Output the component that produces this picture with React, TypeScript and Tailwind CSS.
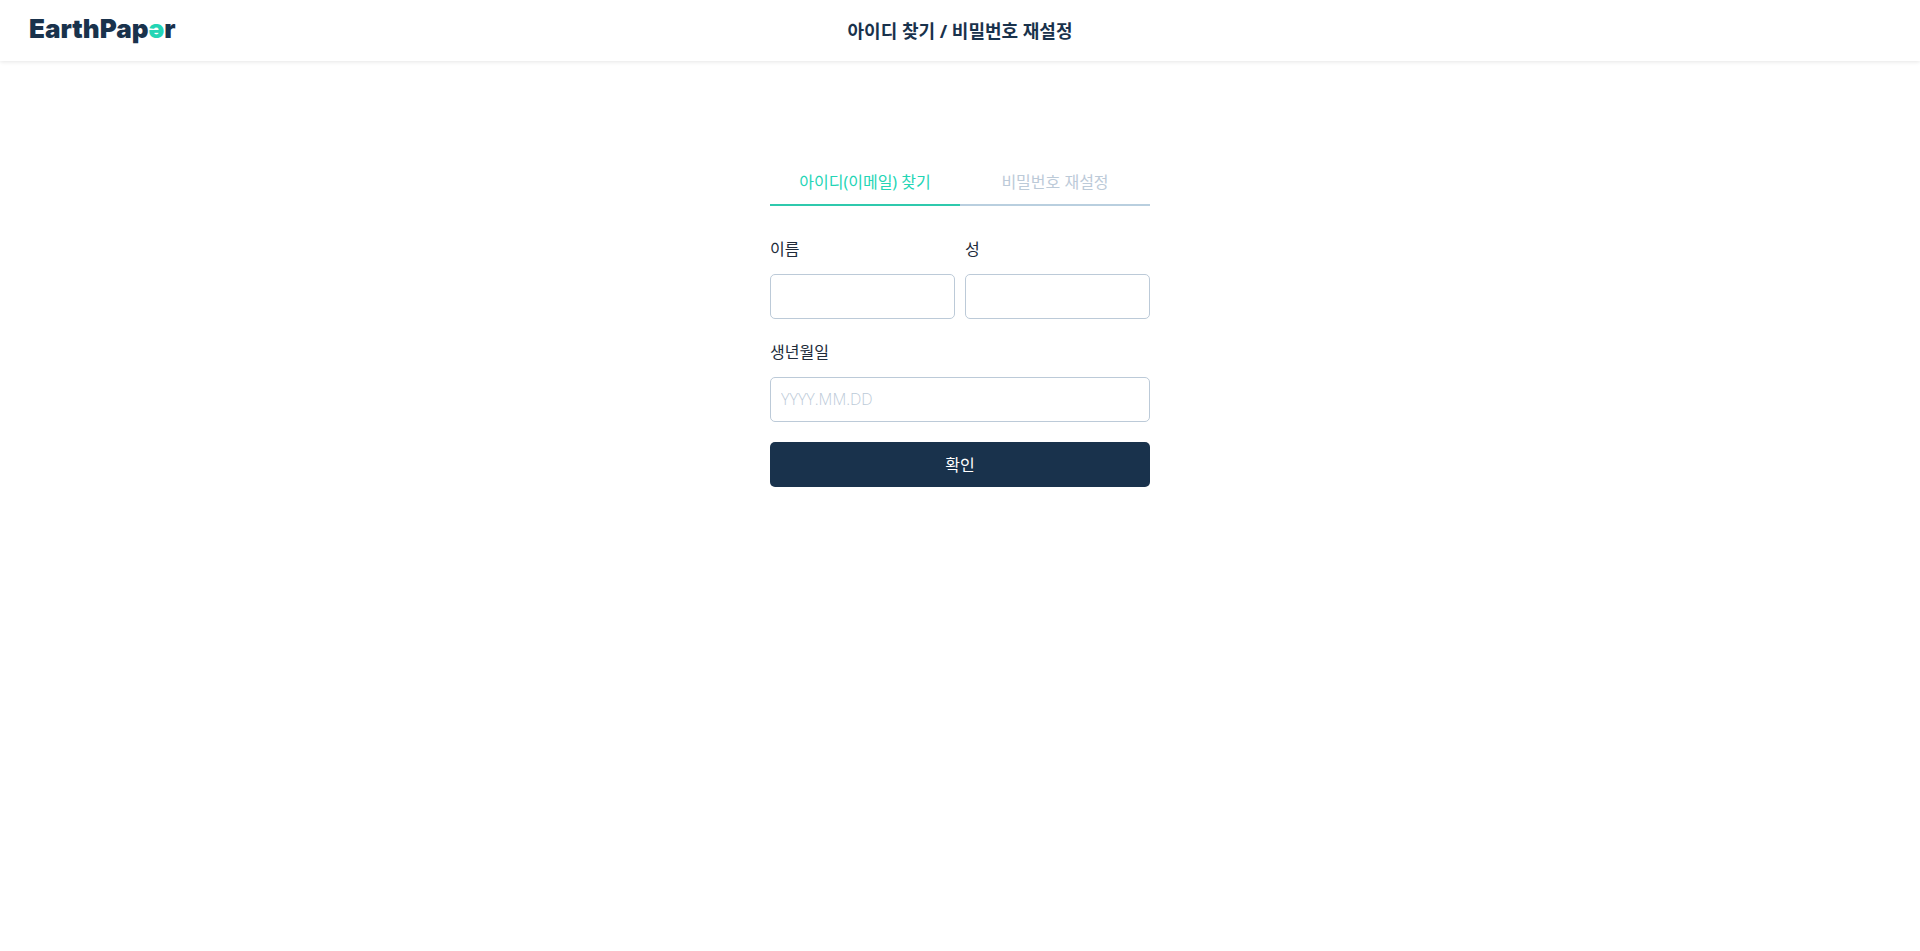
import React, { useState } from 'react'
import { clsx } from 'clsx'

const TABS = [
  { id: 'find-id', label: '아이디(이메일) 찾기' },
  { id: 'reset-password', label: '비밀번호 재설정' },
]

function Logo() {
  return (
    <a
      href="/"
      aria-label="EarthPaper"
      className="pb-1 font-['Inter',sans-serif] text-[26px] leading-7 font-black text-[#19324c]"
    >
      EarthPap<span className="text-[#23d5b5]">ə</span>r
    </a>
  )
}

function Header() {
  return (
    <header className="grid grid-cols-[1fr_auto_1fr] items-center h-[61px] px-[29px] bg-white shadow-[0_1px_4px_rgba(0,0,0,0.1)]">
      <div className="flex">
        <Logo />
      </div>
      <h1 className="text-lg font-bold leading-7 text-[#19324c]">아이디 찾기 / 비밀번호 재설정</h1>
    </header>
  )
}

function Field({ id, label, placeholder }: { id: string; label: string; placeholder?: string }) {
  return (
    <div className="flex flex-1 flex-col gap-3 min-w-0">
      <label htmlFor={id} className="text-base leading-[26px] text-[#212b3a]">
        {label}
      </label>
      <input
        id={id}
        type="text"
        placeholder={placeholder}
        className="w-full h-[45px] px-2.5 pb-0.5 rounded-[5px] border border-[#bccad8] bg-white font-['Open_Sans','Noto_Sans_CJK_KR',sans-serif] text-base font-light text-[#19324c] placeholder:text-[#bccad8] outline-none focus:border-[#23d5b5]"
      />
    </div>
  )
}

export default function App() {
  const [active, setActive] = useState('find-id')

  return (
    <div className="min-h-screen bg-white font-['Noto_Sans','Noto_Sans_CJK_KR',sans-serif]">
      <Header />
      <main className="w-full max-w-[380px] mx-auto pt-[99px]">
        <div role="tablist" className="flex">
          {TABS.map((tab) => (
            <button
              key={tab.id}
              type="button"
              role="tab"
              aria-selected={active === tab.id}
              onClick={() => setActive(tab.id)}
              className={clsx(
                'flex-1 h-[46px] border-b-2 text-base',
                active === tab.id
                  ? 'border-[#2fc9ad] text-[#23d5b5]'
                  : 'border-[#b9cfdf] text-[#bccad8]'
              )}
            >
              {tab.label}
            </button>
          ))}
        </div>

        <form className="flex flex-col gap-5 pt-[30px]" onSubmit={(e) => e.preventDefault()}>
          <div className="flex gap-2.5">
            <Field id="first-name" label="이름" />
            <Field id="last-name" label="성" />
          </div>
          <Field id="birth" label="생년월일" placeholder="YYYY.MM.DD" />
          <button type="submit" className="w-full h-[45px] rounded-[5px] bg-[#19324c] text-base text-white">
            확인
          </button>
        </form>
      </main>
    </div>
  )
}
